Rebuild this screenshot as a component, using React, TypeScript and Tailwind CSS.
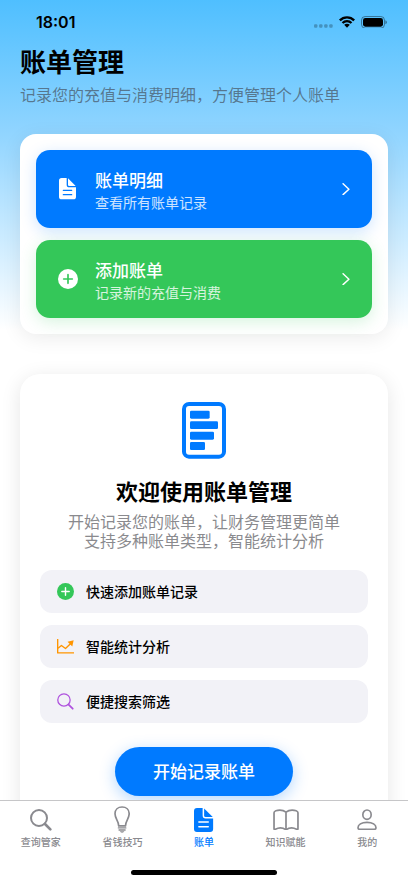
import React from "react";

type ActionCardProps = {
  title: string;
  subtitle: string;
  className: string;
  icon: React.ReactNode;
};

type TabItem = {
  label: string;
  icon: React.ReactNode;
  active?: boolean;
};

const DocIcon = ({ className, lineColor }: { className: string; lineColor: string }) => (
  <svg viewBox="0 0 51 64" className={className} aria-hidden="true">
    <path
      fill="currentColor"
      d="M8 0H23V20Q23 28 31 28H51V56Q51 64 43 64H8Q0 64 0 56V8Q0 0 8 0Z"
    />
    <path fill="currentColor" d="M27 1L50 24H31Q27 24 27 20Z" />
    <path d="M13 37H38M13 50H38" stroke={lineColor} strokeWidth="4" strokeLinecap="round" />
  </svg>
);

const PlusCircleIcon = ({ className, lineColor }: { className: string; lineColor: string }) => (
  <svg viewBox="0 0 60 60" className={className} aria-hidden="true">
    <circle cx="30" cy="30" r="30" fill="currentColor" />
    <path d="M30 17V43M17 30H43" stroke={lineColor} strokeWidth="5" strokeLinecap="round" />
  </svg>
);

const SearchIcon = ({ className, strokeWidth }: { className: string; strokeWidth: number }) => (
  <svg viewBox="0 0 66 66" fill="none" stroke="currentColor" className={className} aria-hidden="true">
    <circle cx="27" cy="27" r="24" strokeWidth={strokeWidth} />
    <path d="M45 45L61 61" strokeWidth={strokeWidth + 2} strokeLinecap="round" />
  </svg>
);

const ChartIcon = () => (
  <svg viewBox="0 0 50 44" fill="none" stroke="currentColor" className="w-[17px] text-[#ff9500]" aria-hidden="true">
    <path d="M2 1V41H49" strokeWidth="4" strokeLinecap="round" strokeLinejoin="round" />
    <path d="M3 27L13 19L25 28L42 12" strokeWidth="4" strokeLinejoin="round" />
    <path d="M31 8L49 4L45 22Z" fill="currentColor" stroke="none" />
  </svg>
);

const ReportIcon = () => (
  <svg viewBox="0 0 132 170" className="w-11 text-[#007aff]" aria-hidden="true">
    <rect x="6" y="6" width="120" height="158" rx="15" fill="none" stroke="currentColor" strokeWidth="12" />
    <g fill="currentColor">
      <rect x="24" y="26" width="59" height="24" rx="4" />
      <rect x="24" y="58" width="84" height="23" rx="4" />
      <rect x="24" y="89" width="72" height="24" rx="4" />
      <rect x="24" y="120" width="45" height="24" rx="4" />
    </g>
  </svg>
);

const BulbIcon = () => (
  <svg viewBox="0 0 48 80" fill="none" stroke="currentColor" className="h-[27px]" aria-hidden="true">
    <path
      d="M14 59C14 44 3 38 3 23C3 11 12 3 24 3S45 11 45 23C45 38 34 44 34 59Z"
      strokeWidth="5"
      strokeLinejoin="round"
    />
    <path d="M13 65H35M15 71H33" strokeWidth="4" strokeLinecap="round" />
    <path d="M17 75H31Q29 79 24 79T17 75Z" fill="currentColor" stroke="none" />
  </svg>
);

const BookIcon = () => (
  <svg
    viewBox="0 0 76 64"
    fill="none"
    stroke="currentColor"
    strokeWidth="5"
    strokeLinejoin="round"
    strokeLinecap="round"
    className="w-[26px]"
    aria-hidden="true"
  >
    <path d="M38 9C33 5 27 3 20 3C12 3 3 6 3 11V57C3 60 4 61 7 59C16 54 29 54 38 61C47 54 60 54 69 59C72 61 73 60 73 57V11C73 6 64 3 56 3C49 3 43 5 38 9V60" />
  </svg>
);

const PersonIcon = () => (
  <svg viewBox="0 0 60 64" fill="none" stroke="currentColor" strokeWidth="5" className="w-5" aria-hidden="true">
    <ellipse cx="30" cy="17" rx="12.500" ry="14" />
    <path d="M8 61Q3 61 3 56C3 47 13 40 30 40S57 47 57 56Q57 61 52 61Z" strokeLinejoin="round" />
  </svg>
);

const StatusBar = () => (
  <div className="flex h-11 items-center justify-between pl-9 pr-[21px]">
    <span className="font-[Inter,sans-serif] text-base font-semibold">18:01</span>
    <div className="flex items-center gap-[6px]">
      <svg viewBox="0 0 56 12" className="mt-2 w-[19px] opacity-25" aria-hidden="true">
        <rect x="0" y="1" width="10" height="10" rx="3" />
        <rect x="15" y="1" width="10" height="10" rx="3" />
        <rect x="30" y="1" width="10" height="10" rx="3" />
        <rect x="45" y="1" width="10" height="10" rx="3" />
      </svg>
      <svg viewBox="0 0 48 36" className="w-4" aria-hidden="true">
        <g fill="none" stroke="currentColor" strokeWidth="7">
          <path d="M2.500 13C14 1 34 1 45.500 13" />
          <path d="M10.500 21C18 13.500 30 13.500 37.500 21" />
        </g>
        <path d="M24 35L15.500 26.500Q24 20 32.500 26.500Z" />
      </svg>
      <svg viewBox="0 0 78 38" className="w-[26px]" aria-hidden="true">
        <rect x="1.500" y="1.500" width="69" height="35" rx="11" fill="none" stroke="currentColor" strokeWidth="3" opacity="0.4" />
        <rect x="6" y="6" width="60" height="26" rx="7" />
        <path d="M73 13Q78 15 78 19T73 25Z" opacity="0.4" />
      </svg>
    </div>
  </div>
);

const ActionCard = ({ title, subtitle, className, icon }: ActionCardProps) => (
  <button type="button" className={`flex w-full items-center rounded-[14px] px-4 py-[17px] text-left text-white ${className}`}>
    <span className="flex w-[31px] justify-center">{icon}</span>
    <span className="ml-3 flex-1">
      <span className="block text-[17px] font-medium leading-[26px]">{title}</span>
      <span className="block text-sm leading-[18px] text-white/80">{subtitle}</span>
    </span>
    <svg viewBox="0 0 22 34" fill="none" stroke="currentColor" className="mr-[6px] w-2" aria-hidden="true">
      <path d="M3 2L19 17L3 32" strokeWidth="4" strokeLinecap="round" strokeLinejoin="round" />
    </svg>
  </button>
);

const features = [
  {
    label: "快速添加账单记录",
    icon: <PlusCircleIcon className="w-[17px] text-[#34c759]" lineColor="#ffffff" />,
  },
  { label: "智能统计分析", icon: <ChartIcon /> },
  {
    label: "便捷搜索筛选",
    icon: <SearchIcon className="w-[17px] text-[#af52de]" strokeWidth={5} />,
  },
];

const tabs: TabItem[] = [
  { label: "查询管家", icon: <SearchIcon className="w-[22px]" strokeWidth={6} /> },
  { label: "省钱技巧", icon: <BulbIcon /> },
  { label: "账单", icon: <DocIcon className="h-6" lineColor="#ffffff" />, active: true },
  { label: "知识赋能", icon: <BookIcon /> },
  { label: "我的", icon: <PersonIcon /> },
];

const TabBar = () => (
  <nav className="relative border-t border-[#c6c6c8] bg-white pb-2">
    <div className="grid grid-cols-5">
      {tabs.map((tab) => (
        <a
          key={tab.label}
          href="#"
          className={`flex flex-col items-center pt-1 ${tab.active ? "text-[#007aff]" : "text-[#8a8a8f]"}`}
        >
          <span className="flex h-[29px] items-center">{tab.icon}</span>
          <span className="text-[10px] font-medium leading-4">{tab.label}</span>
        </a>
      ))}
    </div>
    <div className="mx-auto mt-5 h-[5px] w-[36%] rounded-full bg-black" />
  </nav>
);

const App = () => {
  return (
    <div className="flex h-dvh flex-col bg-white bg-[linear-gradient(180deg,#4fbfff_0px,#8fd4ff_130px,#ffffff_330px)] font-['Noto_Sans_CJK_SC',sans-serif] text-black">
      <main className="min-h-0 flex-1 overflow-y-auto [scrollbar-width:none]">
        <StatusBar />
        <header className="px-5">
          <h1 className="text-[26px] font-bold leading-[34px]">账单管理</h1>
          <p className="mt-[6px] whitespace-nowrap text-base leading-5 text-[#3c3c43]/60">
            记录您的充值与消费明细，方便管理个人账单
          </p>
        </header>

        <section className="mx-5 mt-[30px] flex flex-col gap-3 rounded-2xl bg-white p-4 shadow-[0_4px_20px_rgba(0,0,0,0.08)]">
          <ActionCard
            title="账单明细"
            subtitle="查看所有账单记录"
            className="bg-[#007aff] shadow-[0_4px_16px_rgba(0,122,255,0.2)]"
            icon={<DocIcon className="w-[17px]" lineColor="#007aff" />}
          />
          <ActionCard
            title="添加账单"
            subtitle="记录新的充值与消费"
            className="bg-[#34c759] shadow-[0_4px_16px_rgba(52,199,89,0.2)]"
            icon={<PlusCircleIcon className="w-5" lineColor="#34c759" />}
          />
        </section>

        <section className="mx-5 mb-5 mt-10 flex flex-col items-center rounded-[20px] bg-white px-5 pb-8 pt-7 shadow-[0_4px_20px_rgba(0,0,0,0.1)]">
          <ReportIcon />
          <h2 className="mt-4 text-[22px] font-bold leading-[30px]">欢迎使用账单管理</h2>
          <p className="mt-[7px] whitespace-pre-line text-center text-base leading-[19px] text-[#8a8a8e]">
            {"开始记录您的账单，让财务管理更简单\n支持多种账单类型，智能统计分析"}
          </p>
          <ul className="mt-5 flex w-full flex-col gap-3">
            {features.map((item) => (
              <li key={item.label} className="flex h-[43px] items-center gap-3 rounded-xl bg-[#f2f2f7] px-4">
                <span className="flex w-[18px] justify-center">{item.icon}</span>
                <span className="text-sm font-medium">{item.label}</span>
              </li>
            ))}
          </ul>
          <button
            type="button"
            className="mt-6 h-[49px] rounded-full bg-[#007aff] px-[38px] text-[17px] font-medium text-white shadow-[0_4px_16px_rgba(0,122,255,0.3)]"
          >
            开始记录账单
          </button>
        </section>
      </main>
      <TabBar />
    </div>
  );
};

export default App;
